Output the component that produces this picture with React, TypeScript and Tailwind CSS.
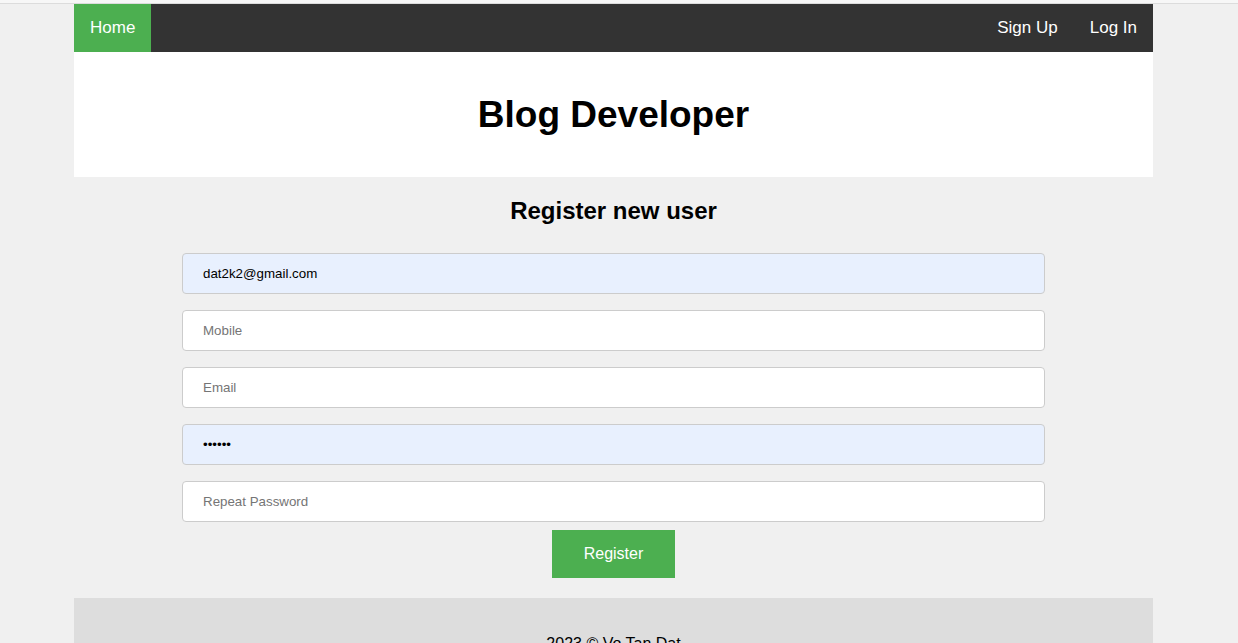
import { useState } from "react";

const fields = [
  { name: "username", placeholder: "Username", type: "text", autofill: true },
  { name: "mobile", placeholder: "Mobile", type: "text", autofill: false },
  { name: "email", placeholder: "Email", type: "email", autofill: false },
  { name: "password", placeholder: "Password", type: "password", autofill: true },
  { name: "repeat", placeholder: "Repeat Password", type: "password", autofill: false },
];

const App = () => {
  const [values, setValues] = useState<Record<string, string>>({
    username: "dat2k2@gmail.com",
    mobile: "",
    email: "",
    password: "123456",
    repeat: "",
  });

  return (
    <div className="min-h-screen bg-[#f0f0f0] font-['Liberation_Sans',Arial,sans-serif] text-black">
      {/* browser strip */}
      <div className="h-[4px] bg-[#f7f7f7] border-b border-[#dcdcdc]" />

      <div className="w-[1227px]">
        <div className="mx-auto w-[1079px]">
          {/* Nav */}
          <nav className="flex h-[48px] items-stretch bg-[#333333] text-[17px] text-white">
            <a className="flex items-center bg-[#4caf50] px-4">Home</a>
            <div className="ml-auto flex">
              <a className="flex items-center px-4">Sign Up</a>
              <a className="flex items-center px-4">Log In</a>
            </div>
          </nav>

          {/* Header */}
          <header className="flex h-[125px] items-center justify-center bg-white">
            <h1 className="text-[37px] font-bold">Blog Developer</h1>
          </header>

          {/* Register form */}
          <main className="pt-[20px] pb-[20px]">
            <h2 className="text-center text-[24px] font-bold leading-[28px]">Register new user</h2>
            <form
              className="mx-auto mt-[28px] flex w-[863px] flex-col gap-4"
              onSubmit={(e) => e.preventDefault()}
            >
              {fields.map((f) => (
                <input
                  key={f.name}
                  type={f.type}
                  placeholder={f.placeholder}
                  value={values[f.name]}
                  onChange={(e) => setValues({ ...values, [f.name]: e.target.value })}
                  className={`h-[41px] w-full rounded-[4px] border border-[#cccccc] px-[20px] text-[13.33px] outline-none placeholder:text-[#757575] ${
                    f.autofill ? "bg-[#e8f0fe]" : "bg-white"
                  }`}
                />
              ))}
            </form>
            <div className="mt-[8px] flex justify-center">
              <button className="h-[48px] w-[123px] bg-[#4caf50] text-[16px] text-white">Register</button>
            </div>
          </main>

          {/* Footer */}
          <footer className="bg-[#dddddd] pt-[34px] pb-[34px] text-center text-[16px]">
            2023 © Vo Tan Dat
          </footer>
        </div>
      </div>
    </div>
  );
};

export default App;
